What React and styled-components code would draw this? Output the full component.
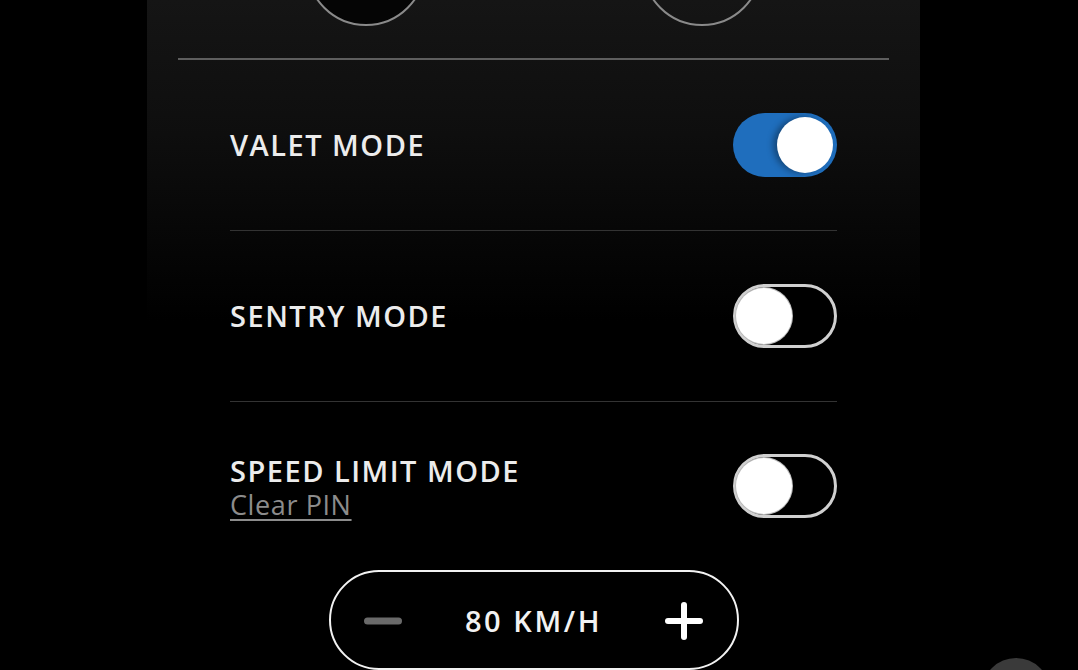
import styled, { createGlobalStyle } from "styled-components";

const GlobalStyle = createGlobalStyle`
  html, body {
    margin: 0;
    padding: 0;
    background: #000;
    overflow: hidden;
  }
  body {
    font-family: "Open Sans", "Liberation Sans", Arial, sans-serif;
    color: #ececec;
  }
`;

const Screen = styled.div`
  position: relative;
  width: 1078px;
  height: 670px;
  overflow: hidden;
  background: #000;
`;

const Panel = styled.div`
  width: 773px;
  margin-left: 147px;
  height: 100%;
  display: flex;
  flex-direction: column;
  background: linear-gradient(180deg, #151515 0%, #0e0e0e 20%, #060606 36%, #000 48%, #000 100%);
`;

const TopButtons = styled.div`
  height: 60px;
  display: flex;
  justify-content: center;
  gap: 216px;
`;

const RoundButton = styled.div`
  width: 116px;
  height: 116px;
  margin-top: -94px;
  border-radius: 50%;
  border: 2px solid #8a8a8a;
  background: ${({ dark }) => (dark ? "#050505" : "transparent")};
`;

const Divider = styled.div`
  height: 2px;
  margin: 0 31px;
  background: #5e5e5e;
`;

const Rows = styled.div`
  padding: 0 83px;
  display: flex;
  flex-direction: column;
`;

const Row = styled.div`
  height: ${({ last }) => (last ? 168 : 170)}px;
  display: flex;
  align-items: center;
  justify-content: space-between;
  border-bottom: ${({ last }) => (last ? "none" : "1px solid #333")};
`;

const Labels = styled.div`
  display: flex;
  flex-direction: column;
  gap: 3px;
  padding-top: 4px;
`;

const Label = styled.span`
  font-size: 29px;
  font-weight: 600;
  letter-spacing: 1.5px;
  line-height: 31px;
  color: #ececec;
`;

const SubLink = styled.span`
  font-size: 27px;
  line-height: 31px;
  letter-spacing: 0.6px;
  color: #8c8c8c;
  text-decoration: underline;
  text-decoration-thickness: 2px;
  text-underline-offset: 4px;
`;

const Track = styled.div`
  box-sizing: border-box;
  width: 104px;
  height: 64px;
  border-radius: 32px;
  padding: ${({ on }) => (on ? "4px" : "0")};
  display: flex;
  justify-content: ${({ on }) => (on ? "flex-end" : "flex-start")};
  align-items: center;
  background: ${({ on }) => (on ? "#1f6ebd" : "#000")};
  border: ${({ on }) => (on ? "none" : "3px solid #d0d0d0")};
`;

const Knob = styled.div`
  width: 56px;
  height: 56px;
  border-radius: 50%;
  background: #fff;
  box-shadow: ${({ on }) => (on ? "-4px 0 6px rgba(0,0,0,0.35)" : "0 0 0 1px #bbb")};
`;

const Toggle = ({ on }) => (
  <Track on={on ? 1 : 0}>
    <Knob on={on ? 1 : 0} />
  </Track>
);

const SpeedPill = styled.div`
  box-sizing: border-box;
  width: 410px;
  height: 104px;
  margin: 0 auto;
  border: 2px solid #f2f2f2;
  border-radius: 52px;
  display: flex;
  align-items: center;
  justify-content: space-between;
  padding: 2px 32px 0 32px;
`;

const SpeedValue = styled.span`
  font-size: 29px;
  font-weight: 600;
  letter-spacing: 2.6px;
  color: #f2f2f2;
`;

const IconButton = styled.div`
  width: 40px;
  height: 40px;
  display: flex;
  align-items: center;
  justify-content: center;
`;

const FloatingButton = styled.div`
  position: absolute;
  left: 982px;
  top: 658px;
  width: 68px;
  height: 68px;
  border-radius: 50%;
  background: #3a3a3a;
`;

export default function App() {
  return (
    <>
      <GlobalStyle />
      <Screen>
        <Panel>
          <TopButtons>
            <RoundButton dark={1} />
            <RoundButton />
          </TopButtons>
          <Divider />
          <Rows>
            <Row>
              <Label>VALET MODE</Label>
              <Toggle on />
            </Row>
            <Row>
              <Label>SENTRY MODE</Label>
              <Toggle />
            </Row>
            <Row last={1}>
              <Labels>
                <Label>SPEED LIMIT MODE</Label>
                <SubLink>Clear PIN</SubLink>
              </Labels>
              <Toggle />
            </Row>
          </Rows>
          <SpeedPill>
            <IconButton>
              <svg width="38" height="8" viewBox="0 0 38 8">
                <rect x="0" y="0.5" width="38" height="7" rx="3.5" fill="#6a6a6a" />
              </svg>
            </IconButton>
            <SpeedValue>80 KM/H</SpeedValue>
            <IconButton>
              <svg width="38" height="38" viewBox="0 0 38 38">
                <rect x="0" y="16" width="38" height="6" rx="3" fill="#fff" />
                <rect x="16" y="0" width="6" height="38" rx="3" fill="#fff" />
              </svg>
            </IconButton>
          </SpeedPill>
        </Panel>
        <FloatingButton />
      </Screen>
    </>
  );
}
